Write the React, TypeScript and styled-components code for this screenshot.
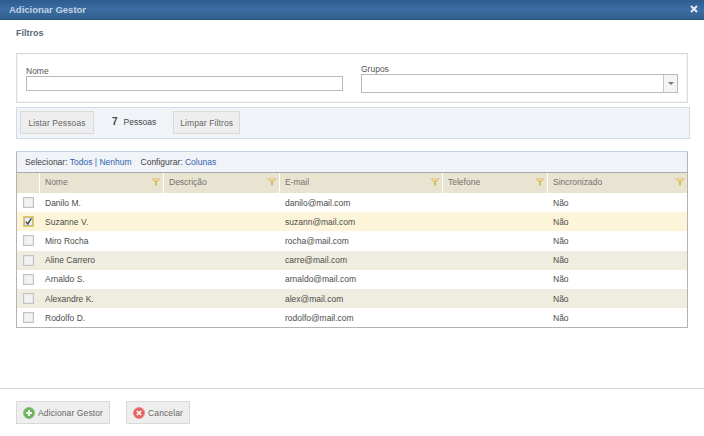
import styled, { createGlobalStyle } from 'styled-components';

const GlobalStyle = createGlobalStyle`
  html, body {
    margin: 0;
    padding: 0;
    background: #fff;
  }
  body {
    font-family: "Liberation Sans", Arial, sans-serif;
    font-size: 9px;
    color: #444;
  }
  * {
    box-sizing: border-box;
  }
`;

const GRID_COLUMNS = '22px 124px 116px 163px 105px 1fr';

const Dialog = styled.div`
  display: flex;
  flex-direction: column;
  width: 704px;
  height: 436px;
  overflow: hidden;
`;

const TitleBar = styled.header`
  display: flex;
  align-items: center;
  justify-content: space-between;
  height: 20px;
  padding: 0 6px 1px 9px;
  background: linear-gradient(#2d5c8e 0%, #3a6da3 45%, #34628f 100%);
  border-bottom: 1px solid #2a4d70;
  color: #c3d1e0;
  font-size: 9.5px;
  font-weight: 700;
`;

const Body = styled.main`
  flex: 1;
  padding: 8px 14px 0 16px;
`;

const SectionTitle = styled.h2`
  margin: 0 0 15px;
  height: 10px;
  font-size: 9px;
  line-height: 10px;
  font-weight: 700;
  color: #5a6875;
`;

const FilterBox = styled.section`
  display: grid;
  grid-template-columns: 317px 317px;
  column-gap: 18px;
  align-items: end;
  height: 50px;
  width: 672px;
  padding: 0 9px 9px;
  border: 1px solid #dcdcdc;
  box-shadow: inset 0 0 0 0.5px #eee;
`;

const Field = styled.label`
  display: flex;
  flex-direction: column;
  font-size: 8.5px;
  line-height: 10px;
  color: #555;
`;

const TextInput = styled.div`
  height: 15px;
  margin-bottom: 2px;
  background: #fff;
  border: 1px solid #b4bac4;
`;

const Select = styled.div`
  display: flex;
  justify-content: flex-end;
  height: 19px;
  background: #fff;
  border: 1px solid #b4bac4;
`;

const SelectArrow = styled.span`
  display: flex;
  align-items: center;
  justify-content: center;
  width: 14px;
  background: #f4f4f4;
  border-left: 1px solid #c4c8ce;

  &::after {
    content: '';
    border-top: 3px solid #777;
    border-left: 3px solid transparent;
    border-right: 3px solid transparent;
  }
`;

const ActionBar = styled.section`
  display: flex;
  align-items: center;
  width: 674px;
  height: 32px;
  margin-top: 4px;
  padding: 0 3px 1px;
  background: #f0f3f8;
  border: 1px solid #d2dce8;
`;

const Button = styled.button<{ $width: number }>`
  display: inline-flex;
  align-items: center;
  justify-content: center;
  gap: 3px;
  width: ${({ $width }) => $width}px;
  height: 23px;
  padding: 0;
  background: #eeeeee;
  border: 1px solid #d9d9d9;
  font-family: inherit;
  font-size: 8.5px;
  letter-spacing: 0.1px;
  white-space: nowrap;
  color: #666;
`;

const Count = styled.div`
  display: flex;
  align-items: baseline;
  gap: 6px;
  margin: 0 17px 3px 18px;
  color: #444;
  font-size: 8.5px;

  strong {
    font-size: 10px;
  }
`;

const Grid = styled.section`
  width: 672px;
  margin-top: 12px;
  border: 1px solid #b3b3b3;
  border-top-color: #c4d2e2;
`;

const GridToolbar = styled.div`
  display: flex;
  align-items: center;
  gap: 9px;
  height: 21px;
  padding: 0 8px;
  background: #f0f3f8;
  border-bottom: 1px solid #a9adb2;
  font-size: 8.5px;
  color: #444;

  a {
    color: #3262ad;
    text-decoration: none;
  }
`;

const HeaderRow = styled.div`
  display: grid;
  grid-template-columns: ${GRID_COLUMNS};
  height: 20px;
  background: #e9e4d1;
`;

const HeaderCell = styled.div`
  display: flex;
  align-items: center;
  justify-content: space-between;
  padding: 0 2px 2px 5px;
  border-left: 1px solid #fff;
  font-size: 8.5px;
  color: #707070;

  &:first-child {
    border-left: 0;
  }
`;

const Row = styled.div<{ $tone: 'plain' | 'alt' | 'selected' }>`
  display: grid;
  grid-template-columns: ${GRID_COLUMNS};
  height: 19.2px;
  background: ${({ $tone }) =>
    $tone === 'selected' ? '#fcf5d9' : $tone === 'alt' ? '#efece0' : '#fff'};
`;

const Cell = styled.div`
  display: flex;
  align-items: center;
  padding-left: 5px;
  border-left: 1px solid transparent;
  font-size: 8.5px;
  color: #4c4c4c;
`;

const CheckCell = styled.div`
  display: flex;
  align-items: center;
  justify-content: center;
`;

const CheckBox = styled.span<{ $checked?: boolean }>`
  display: flex;
  align-items: center;
  justify-content: center;
  width: 11px;
  height: 11px;
  background: #f2f2f2;
  border: 1px solid ${({ $checked }) => ($checked ? '#e8cc4a' : '#c2c2c2')};
  box-shadow: inset 0 0 0 1px ${({ $checked }) => ($checked ? '#b9b9b9' : '#e8e8e8')};
`;

const Footer = styled.footer`
  display: flex;
  gap: 16px;
  height: 48px;
  padding: 12px 16px 0;
  border-top: 1px solid #d6d6d6;
`;

const FilterIcon = () => (
  <svg width="10" height="8" viewBox="0 0 10 8" aria-hidden="true">
    <path d="M0.5 0.5H9.5L6 4V7.5H4V4Z" fill="#d8b85c" />
    <path d="M2 1H8L6.2 2.5H3.8Z" fill="#f0e2ac" />
  </svg>
);

const CheckIcon = () => (
  <svg width="9" height="9" viewBox="0 0 9 9" aria-hidden="true">
    <path d="M1.8 4.6L3.8 7L7.4 1.4" fill="none" stroke="#444" strokeWidth="1.4" />
  </svg>
);

const CloseIcon = () => (
  <svg width="8" height="8" viewBox="0 0 8 8" aria-hidden="true">
    <path d="M1 1L7 7M7 1L1 7" stroke="#e8edf2" strokeWidth="2" />
  </svg>
);

const AddIcon = () => (
  <svg width="12" height="12" viewBox="0 0 12 12" aria-hidden="true">
    <circle cx="6" cy="6" r="5.5" fill="#6cb25c" stroke="#8cc47e" />
    <path d="M6 3V9M3 6H9" stroke="#f2f8ef" strokeWidth="2" />
  </svg>
);

const CancelIcon = () => (
  <svg width="12" height="12" viewBox="0 0 12 12" aria-hidden="true">
    <circle cx="6" cy="6" r="5.5" fill="#e0625a" stroke="#ea8f88" />
    <path d="M3.8 3.8L8.2 8.2M8.2 3.8L3.8 8.2" stroke="#fbeeee" strokeWidth="1.8" />
  </svg>
);

const columns = ['Nome', 'Descrição', 'E-mail', 'Telefone', 'Sincronizado'];

const people = [
  { name: 'Danilo M.', email: 'danilo@mail.com' },
  { name: 'Suzanne V.', email: 'suzann@mail.com', selected: true },
  { name: 'Miro Rocha', email: 'rocha@mail.com' },
  { name: 'Aline Carrero', email: 'carre@mail.com' },
  { name: 'Arnaldo S.', email: 'arnaldo@mail.com' },
  { name: 'Alexandre K.', email: 'alex@mail.com' },
  { name: 'Rodolfo D.', email: 'rodolfo@mail.com' },
];

function App() {
  return (
    <Dialog>
      <GlobalStyle />
      <TitleBar>
        Adicionar Gestor
        <CloseIcon />
      </TitleBar>
      <Body>
        <SectionTitle>Filtros</SectionTitle>
        <FilterBox>
          <Field>
            Nome
            <TextInput />
          </Field>
          <Field>
            Grupos
            <Select>
              <SelectArrow />
            </Select>
          </Field>
        </FilterBox>
        <ActionBar>
          <Button $width={74}>Listar Pessoas</Button>
          <Count>
            <strong>7</strong> Pessoas
          </Count>
          <Button $width={67}>Limpar Filtros</Button>
        </ActionBar>
        <Grid>
          <GridToolbar>
            <span>
              Selecionar: <a href="#todos">Todos</a> <a href="#sep">|</a> <a href="#nenhum">Nenhum</a>
            </span>
            <span>
              Configurar: <a href="#colunas">Colunas</a>
            </span>
          </GridToolbar>
          <HeaderRow>
            <HeaderCell />
            {columns.map((column) => (
              <HeaderCell key={column}>
                {column}
                <FilterIcon />
              </HeaderCell>
            ))}
          </HeaderRow>
          {people.map((person, index) => (
            <Row
              key={person.email}
              $tone={person.selected ? 'selected' : index % 2 === 1 ? 'alt' : 'plain'}
            >
              <CheckCell>
                <CheckBox $checked={person.selected}>{person.selected && <CheckIcon />}</CheckBox>
              </CheckCell>
              <Cell>{person.name}</Cell>
              <Cell />
              <Cell>{person.email}</Cell>
              <Cell />
              <Cell>Não</Cell>
            </Row>
          ))}
        </Grid>
      </Body>
      <Footer>
        <Button $width={94}>
          <AddIcon />
          Adicionar Gestor
        </Button>
        <Button $width={64}>
          <CancelIcon />
          Cancelar
        </Button>
      </Footer>
    </Dialog>
  );
}

export default App;
